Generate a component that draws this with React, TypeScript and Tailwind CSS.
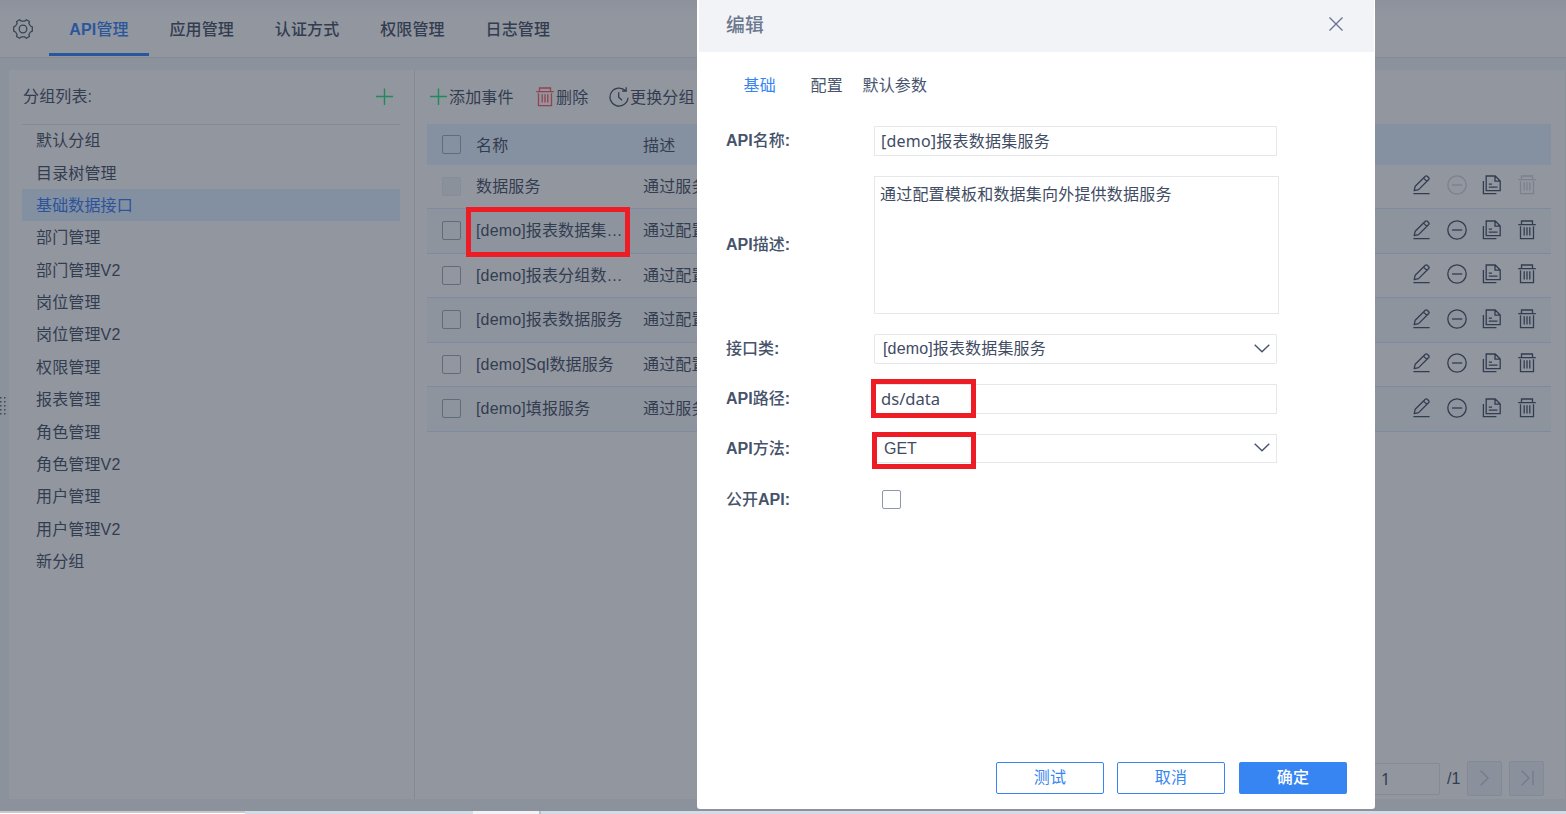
import type { ReactNode } from 'react';
import { clsx } from 'clsx';

interface ApiRow {
  name: string;
  description: string;
  locked?: boolean;
  height: string;
}

const tabs = ['应用管理', '认证方式', '权限管理', '日志管理'];

const groups = [
  '默认分组',
  '目录树管理',
  '基础数据接口',
  '部门管理',
  '部门管理V2',
  '岗位管理',
  '岗位管理V2',
  '权限管理',
  '报表管理',
  '角色管理',
  '角色管理V2',
  '用户管理',
  '用户管理V2',
  '新分组',
];

const rows: ApiRow[] = [
  { name: '数据服务', description: '通过服务', locked: true, height: 'h-[44px]' },
  { name: '[demo]报表数据集…', description: '通过配置', height: 'h-[45px]' },
  { name: '[demo]报表分组数…', description: '通过配置', height: 'h-[44px]' },
  { name: '[demo]报表数据服务', description: '通过配置', height: 'h-[45px]' },
  { name: '[demo]Sql数据服务', description: '通过配置', height: 'h-[44px]' },
  { name: '[demo]填报服务', description: '通过服务', height: 'h-[45px]' },
];

function GearIcon() {
  return (
    <svg width="20" height="20" viewBox="0 0 20 20" fill="none" stroke="currentColor" strokeWidth="1.3">
      <path d="M6.6 .7 L8.2 2.1 H11.8 L13.4 .7 L16.4 2.5 L15.9 4.5 L17.5 7 L19.3 7.8 V12.2 L17.5 13 L15.9 15.5 L16.4 17.5 L13.4 19.3 L11.8 17.9 H8.2 L6.6 19.3 L3.6 17.5 L4.1 15.5 L2.5 13 L.7 12.2 V7.8 L2.5 7 L4.1 4.5 L3.6 2.5 Z" strokeLinejoin="round" />
      <circle cx="10" cy="10" r="3.8" />
    </svg>
  );
}

function PlusIcon() {
  return (
    <svg width="18" height="18" viewBox="0 0 18 18" stroke="#1f8a5b" strokeWidth="1.4">
      <path d="M9.5 .5V17M1 8.5H18" />
    </svg>
  );
}

function TrashIcon() {
  return (
    <svg width="18" height="20" viewBox="0 0 18 20" fill="none" stroke="currentColor" strokeWidth="1.3">
      <path d="M.2 4.6H17.8M3.5 4.6V1H14.5V4.6M2.5 6.3V18.6H15.5V6.3M6.2 7.2V15.5M9 7.2V15.5M11.8 7.2V15.5" />
    </svg>
  );
}

function ClockIcon() {
  return (
    <svg width="20" height="20" viewBox="0 0 20 20" fill="none" stroke="currentColor" strokeWidth="1.3">
      <path d="M16.5 3.8A9 9 0 1 0 19 10.8M17.2 .2V4.2H13M9.7 5.2V10.3L13 13.3" />
    </svg>
  );
}

function EditIcon() {
  return (
    <svg width="18" height="20" viewBox="0 0 18 20" fill="none" stroke="currentColor" strokeWidth="1.3">
      <path d="M1.2 15.6L2.2 11.2L12.3 1.2Q13.3 .4 14.3 1.3L15.7 2.7Q16.5 3.6 15.7 4.5L5.6 14.6Z M10.5 3.1L13.9 6.4M.4 18.6H16.6" strokeLinejoin="round" />
    </svg>
  );
}

function MinusCircleIcon() {
  return (
    <svg width="20" height="20" viewBox="0 0 20 20" fill="none" stroke="currentColor" strokeWidth="1.3">
      <circle cx="10" cy="10" r="9.2" />
      <path d="M5 10H15.2" />
    </svg>
  );
}

function CopyIcon() {
  return (
    <svg width="20" height="20" viewBox="0 0 20 20" fill="none" stroke="currentColor" strokeWidth="1.3">
      <path d="M4.2 1H13.2L18.2 6V15.6H4.2Z M13 1V6.2H18.2M1.4 6V18.6H14.4M6.8 9.2H10M6.8 12.2H15.5" />
    </svg>
  );
}

function ChevronDownIcon() {
  return (
    <svg width="16" height="9" viewBox="0 0 16 9" fill="none" stroke="#46536b" strokeWidth="1.4">
      <path d="M.7 .7L8 7.8L15.3 .7" />
    </svg>
  );
}

function Checkbox({ disabled }: { disabled?: boolean }) {
  return (
    <span
      className={clsx(
        'block h-[19px] w-[19px] shrink-0 rounded-[2px] border',
        disabled ? 'border-[#868d99] bg-[#8a919b]' : 'border-[#626b7b]'
      )}
    />
  );
}

function Label({ children }: { children: ReactNode }) {
  return <div className="w-[148px] shrink-0 font-medium tracking-normal text-[#46536b]">{children}</div>;
}

function TopBar() {
  return (
    <header className="flex h-[58px] shrink-0 border-b border-[#848993] bg-gradient-to-b from-[#8d919c] to-[#92969f] to-30%">
      <div className="flex w-[49px] items-center pl-[13px] text-[#3b4455]">
        <GearIcon />
      </div>
      <nav className="flex font-medium">
        <div className="flex h-[56px] w-[100px] items-center justify-center whitespace-pre border-b-[3px] border-[#28589b] pt-[6px] text-[#2b569c]">
          <b>API</b>管理
        </div>
        {tabs.map((tab) => (
          <div key={tab} className="flex h-[56px] w-[105.4px] items-center justify-center pt-[3px]">
            {tab}
          </div>
        ))}
      </nav>
    </header>
  );
}

function GroupPanel() {
  return (
    <aside className="w-[406px] shrink-0 border-r border-[#858994] pl-[13px] pr-[14px]">
      <div className="flex h-[55px] items-center justify-between border-b border-[#848994] pl-px pr-[7px]">
        <span>分组列表:</span>
        <PlusIcon />
      </div>
      <ul>
        {groups.map((group, idx) => (
          <li
            key={group}
            className={clsx(
              'flex h-[32.375px] items-center pl-[14px]',
              idx === 2 && '-mt-px mb-px bg-[#8390a1] pt-[2px] text-[#2d539b]'
            )}
          >
            {group}
          </li>
        ))}
      </ul>
    </aside>
  );
}

function ApiTable() {
  return (
    <section className="flex min-w-0 flex-1 flex-col pl-3 pr-[14px]">
      <div className="flex h-[54px] items-center">
        <span className="flex w-[109px] items-center gap-[2px] pl-[2px]">
          <PlusIcon />
          <span className="pt-px">添加事件</span>
        </span>
        <span className="flex w-[73px] items-center gap-[2px]">
          <span className="text-[#944250]">
            <TrashIcon />
          </span>
          <span className="pt-px">删除</span>
        </span>
        <span className="flex items-center gap-px">
          <ClockIcon />
          <span className="pt-px">更换分组</span>
        </span>
      </div>
      <div className="flex h-[41px] items-center bg-[#8590a0] pl-[15px]">
        <Checkbox />
        <span className="ml-[15px] w-[167px] pt-[2px]">名称</span>
        <span className="pt-[2px]">描述</span>
      </div>
      {rows.map((row, idx) => (
        <div
          key={row.name}
          className={clsx(
            'flex items-center border-b border-[#7d8aa2] pl-[15px]',
            row.height,
            idx % 2 === 1 && 'bg-[#8e949e]'
          )}
        >
          <span className="pb-px">
            <Checkbox disabled={row.locked} />
          </span>
          <span className="ml-[15px] w-[147px] whitespace-nowrap">{row.name}</span>
          <span className="ml-5 flex-1">{row.description}</span>
          <span className="flex items-center pb-[3px] pr-[15px] text-[#333d50]">
            <EditIcon />
            <span className={clsx('ml-4', row.locked && 'text-[#7b818d]')}>
              <MinusCircleIcon />
            </span>
            <span className="ml-[15px]">
              <CopyIcon />
            </span>
            <span className={clsx('ml-4', row.locked && 'text-[#7b818d]')}>
              <TrashIcon />
            </span>
          </span>
        </div>
      ))}
      <div className="mb-[3px] mr-[7px] mt-auto flex h-[35px] items-center justify-end">
        <span className="flex h-8 w-[68px] items-center rounded-[2px] border border-[#858b96] pl-2 font-['Noto_Sans']">
          1
        </span>
        <span className="ml-[7px] w-5">/1</span>
        <span className="flex h-[35px] w-[35px] items-center justify-center rounded-[2px] border border-[#838a95] bg-[#8b919c] pb-[2px] text-[#747c8a]">
          <svg width="9" height="16" viewBox="0 0 9 16" fill="none" stroke="currentColor" strokeWidth="1.4">
            <path d="M.7 .7L8 8L.7 15.3" />
          </svg>
        </span>
        <span className="ml-[7px] flex h-[35px] w-[35px] items-center justify-center rounded-[2px] border border-[#838a95] bg-[#8b919c] pb-[2px] pl-px text-[#747c8a]">
          <svg width="13" height="16" viewBox="0 0 13 16" fill="none" stroke="currentColor" strokeWidth="1.4">
            <path d="M.7 .7L8 8L.7 15.3M12 .7V15.3" />
          </svg>
        </span>
      </div>
    </section>
  );
}

function EditDialog() {
  return (
    <div className="absolute left-[697px] top-0 flex h-[809px] w-[678px] flex-col rounded-b-[3px] bg-white text-[#46536b]">
      <div className="ml-[2px] mr-[1px] flex h-[52px] shrink-0 items-center justify-between bg-[#f2f3f7] pb-1 pl-[27px] pr-[31px] text-[18.8px] font-medium text-[#6b788e]">
        <span className="pt-[3px]">编辑</span>
        <svg width="14" height="14" viewBox="0 0 14 14" stroke="#66748b" strokeWidth="1.3">
          <path d="M.5 .5L13.5 13.5M13.5 .5L.5 13.5" />
        </svg>
      </div>
      <div className="flex h-[74px] items-center pb-[7px] pl-[46.5px]">
        <span className="w-[67px] text-[#3685f2]">基础</span>
        <span className="w-[52px]">配置</span>
        <span>默认参数</span>
      </div>
      <div className="flex flex-col gap-5 pl-[29px] text-[#3f4c63]">
        <div className="flex h-[30px] items-center">
          <Label><b>API</b>名称<b>:</b></Label>
          <div className="flex h-full w-[403px] items-center border border-[#e6e7ea] pl-[6px] font-['Noto_Sans','Noto_Sans_CJK_SC',sans-serif] tracking-[0.22px]">
            [demo]报表数据集服务
          </div>
        </div>
        <div className="flex h-[138px] items-center">
          <Label><b>API</b>描述<b>:</b></Label>
          <div className="h-full w-[405px] border border-[#e6e7ea] pl-[5px] pt-[6px] tracking-[0.2px]">
            通过配置模板和数据集向外提供数据服务
          </div>
        </div>
        <div className="flex h-[30px] items-center">
          <Label>接口类<b>:</b></Label>
          <div className="flex h-full w-[403px] items-center justify-between rounded-[2px] border border-[#e6e7ea] pb-[2px] pl-2 pr-[6px]">
            <span className="pt-[2px]">[demo]报表数据集服务</span>
            <ChevronDownIcon />
          </div>
        </div>
        <div className="flex h-[30px] items-center">
          <Label><b>API</b>路径<b>:</b></Label>
          <div className="flex h-full w-[403px] items-center border border-[#e6e7ea] pl-[6px] font-['Noto_Sans','Noto_Sans_CJK_SC',sans-serif] text-[16.6px] tracking-normal">
            ds/data
          </div>
        </div>
        <div className="flex h-[29px] items-center">
          <Label><b>API</b>方法<b>:</b></Label>
          <div className="flex h-full w-[403px] items-center justify-between border border-[#e6e7ea] pb-[2px] pl-[9px] pr-[6px]">
            <span className="pt-[2px] tracking-normal">GET</span>
            <ChevronDownIcon />
          </div>
        </div>
        <div className="flex h-[33px] items-center">
          <Label>公开<b>API:</b></Label>
          <span className="ml-2 h-[19px] w-[19px] rounded-[2px] border border-[#8e98a8]" />
        </div>
      </div>
      <div className="mb-[15px] mr-7 mt-auto flex justify-end text-[#3685f2]">
        <button className="mr-[13px] h-8 w-[108px] rounded-[2px] border border-[#3685f2]">测试</button>
        <button className="mr-[14px] h-8 w-[108px] rounded-[2px] border border-[#3685f2]">取消</button>
        <button className="h-8 w-[108px] rounded-[2px] bg-[#3685f2] font-medium text-white">确定</button>
      </div>
    </div>
  );
}

export default function App() {
  return (
    <div className="relative flex h-[814px] w-[1566px] flex-col overflow-hidden bg-[#8b929c] font-['Liberation_Sans','Noto_Sans_CJK_SC',sans-serif] text-base leading-6 tracking-[0.15px] text-[#333d50]">
      <TopBar />
      <main className="ml-[9px] mr-px mt-3 flex h-[729px] shrink-0 bg-[#92969f]">
        <GroupPanel />
        <ApiTable />
      </main>
      {/* Edge of the window underneath */}
      <div className="mt-auto flex h-[3px] shrink-0 bg-[#d2dbe6]">
        <div className="w-[245px] border-t-2 border-[#c9c9c9] bg-white" />
        <div className="ml-[228px] w-[66px] bg-[#f0f2f6]" />
        <div className="w-[2px] bg-[#b9bfc9]" />
      </div>

      {/* Splitter handle */}
      <svg className="absolute left-0 top-[397px]" width="6" height="18" fill="#3e4759">
        {[0, 4, 8, 12, 16].map((y) => (
          <g key={y}>
            <rect x="0" y={y} width="1.5" height="1.5" />
            <rect x="4" y={y} width="1.5" height="1.5" />
          </g>
        ))}
      </svg>

      <EditDialog />

      {/* Callouts */}
      <div className="absolute left-[466px] top-[207px] h-[50px] w-[164px] border-[5px] border-[#ee1c24]" />
      <div className="absolute left-[871px] top-[379px] h-[39px] w-[105px] border-[5px] border-[#ee1c24]" />
      <div className="absolute left-[872px] top-[432px] h-[37px] w-[104px] border-[5px] border-[#ee1c24]" />
    </div>
  );
}
